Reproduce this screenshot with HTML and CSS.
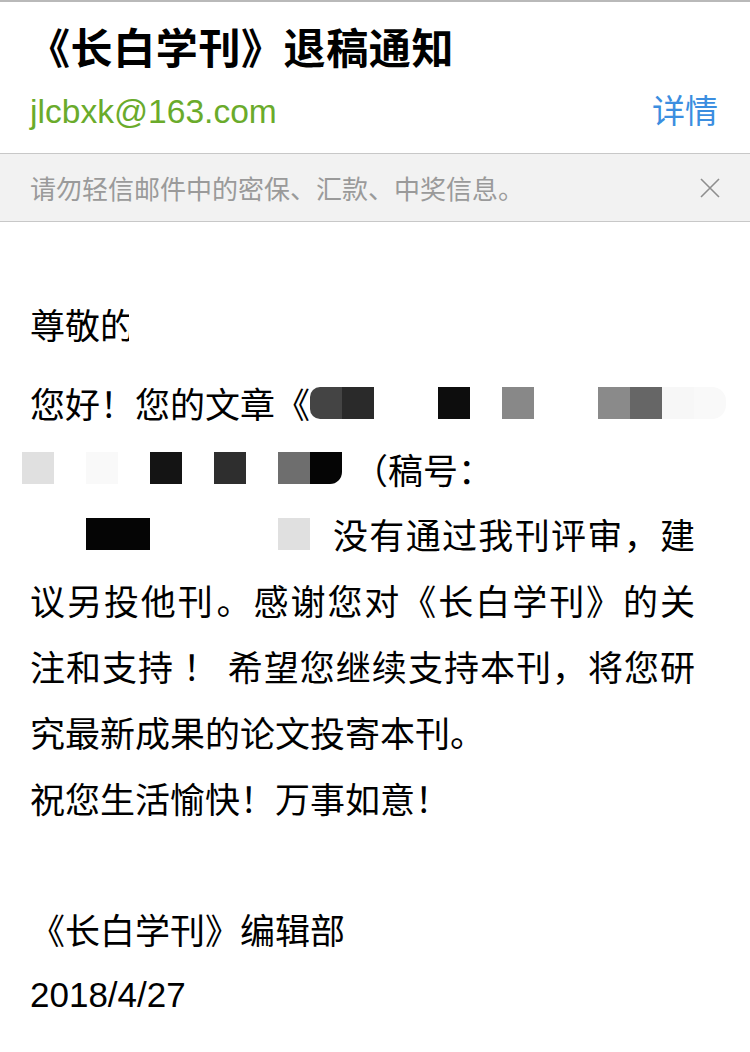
FILE: index.html
```html
<!DOCTYPE html>
<html lang="zh-CN">
<head>
<meta charset="utf-8">
<title>《长白学刊》退稿通知</title>
<link rel="stylesheet" href="styles.css">
</head>
<body>
<div class="page">
  <header class="mail-head">
    <h1 class="subject">《长白学刊》退稿通知</h1>
    <div class="sender-row">
      <span class="sender">jlcbxk@163.com</span>
      <span class="detail">详情</span>
    </div>
  </header>

  <div class="notice">
    <span class="notice-text">请勿轻信邮件中的密保、汇款、中奖信息。</span>
    <svg class="notice-close" width="20" height="20" viewBox="0 0 20 20" aria-hidden="true">
      <path d="M1 1 L19 19 M19 1 L1 19" stroke="#8e8e8e" stroke-width="1.6" fill="none"/>
    </svg>
  </div>

  <main class="mail-body">
    <div class="line greet"><span class="txt">尊敬的</span><span class="mask"></span></div>

    <div class="line">
      <span class="txt">您好！您的文章《</span>
      <span class="redact">
        <i class="cell c-444 round-l"></i><i class="cell c-2a"></i><i class="cell"></i><i class="cell"></i><i class="cell c-0d"></i><i class="cell"></i><i class="cell c-88"></i><i class="cell"></i><i class="cell"></i><i class="cell c-8a"></i><i class="cell c-66"></i><i class="cell c-f7"></i><i class="cell c-f9 round-r"></i>
      </span>
    </div>

    <div class="line">
      <span class="redact shift">
        <i class="cell c-e0"></i><i class="cell"></i><i class="cell c-f9"></i><i class="cell"></i><i class="cell c-14"></i><i class="cell"></i><i class="cell c-2e"></i><i class="cell"></i><i class="cell c-6e"></i><i class="cell c-05 round-br"></i>
      </span>
      <span class="txt after-redact">（稿号：</span>
    </div>

    <div class="line">
      <span class="redact shift">
        <i class="cell"></i><i class="cell"></i><i class="cell c-05"></i><i class="cell c-05"></i><i class="cell"></i><i class="cell"></i><i class="cell"></i><i class="cell"></i><i class="cell c-e0"></i>
      </span>
      <span class="txt fill justify">没有通过我刊评审，建</span>
    </div>

    <div class="line justify tight">议另投他刊 。感谢您对《长白学刊》的关</div>
    <div class="line justify">注和支持 ！ 希望您继续支持本刊，将您研</div>
    <div class="line">究最新成果的论文投寄本刊。</div>
    <div class="line">祝您生活愉快！万事如意！</div>
    <div class="line blank"></div>
    <div class="line">《长白学刊》编辑部</div>
    <div class="line date">2018/4/27</div>
  </main>
</div>
</body>
</html>
```

FILE: styles.css
```css
* { box-sizing: border-box; }

html, body {
  margin: 0;
  padding: 0;
  background: #ffffff;
}

.page {
  width: 750px;
  min-height: 1052px;
  border-top: 2px solid #b9b9b9;
  font-family: "Noto Sans CJK SC", "Liberation Sans", sans-serif;
  color: #000;
}

.mail-head {
  padding: 14px 32px 0 28px;
}

.subject {
  margin: 0;
  font-size: 42px;
  line-height: 60px;
  font-weight: 700;
  letter-spacing: 0.6px;
  color: #000;
}

.sender-row {
  display: flex;
  justify-content: space-between;
  align-items: flex-start;
  margin-top: 16px;
  padding-left: 2px;
  height: 40px;
}

.sender {
  font-family: "Liberation Sans", sans-serif;
  font-size: 33.6px;
  line-height: 40px;
  color: #6aab2b;
}

.detail {
  font-size: 33px;
  line-height: 40px;
  color: #3b8ee0;
  margin-top: -3px;
}

.notice {
  margin-top: 21px;
  height: 69px;
  display: flex;
  align-items: center;
  justify-content: space-between;
  padding: 0 30px;
  background: #f2f2f2;
  border-top: 1px solid #c8c8c8;
  border-bottom: 1px solid #c8c8c8;
}

.notice-text {
  font-size: 26px;
  line-height: 36px;
  color: #9a9a9a;
}

.notice-close {
  display: block;
  flex: none;
}

.mail-body {
  padding: 69px 55px 0 30px;
  font-size: 35px;
}

.line {
  height: 65.8px;
  line-height: 65.8px;
  display: flex;
  align-items: center;
  white-space: nowrap;
}

.line.greet {
  margin-bottom: 13px;
}

.line.justify {
  display: block;
  text-align: justify;
  text-align-last: justify;
}

.line.tight {
  word-spacing: -8px;
}

.txt {
  display: block;
}

.txt.fill {
  flex: 1;
  margin-left: 23px;
  text-align: justify;
  text-align-last: justify;
}

.mask {
  display: block;
  width: 110px;
  height: 46px;
  margin-left: -6px;
  background: #fff;
}

.redact {
  display: flex;
  flex: none;
  height: 32px;
}

.redact.shift {
  margin-left: -8px;
}

.after-redact {
  margin-left: 11px;
}

.cell {
  display: block;
  width: 32px;
  height: 32px;
  background: transparent;
}

.c-05 { background: #050505; }
.c-0d { background: #0d0d0d; }
.c-14 { background: #141414; }
.c-2a { background: #2a2a2a; }
.c-2e { background: #2e2e2e; }
.c-444 { background: #444444; }
.c-66 { background: #666666; }
.c-6e { background: #6e6e6e; }
.c-88 { background: #888888; }
.c-8a { background: #8a8a8a; }
.c-e0 { background: #e0e0e0; }
.c-f7 { background: #f7f7f7; }
.c-f9 { background: #f9f9f9; }

.round-l { border-radius: 10px 0 0 10px; }
.round-r { border-radius: 0 14px 14px 0; }
.round-br { border-radius: 0 0 12px 0; }

.line.date {
  font-family: "Liberation Sans", sans-serif;
  font-size: 35px;
}
```
